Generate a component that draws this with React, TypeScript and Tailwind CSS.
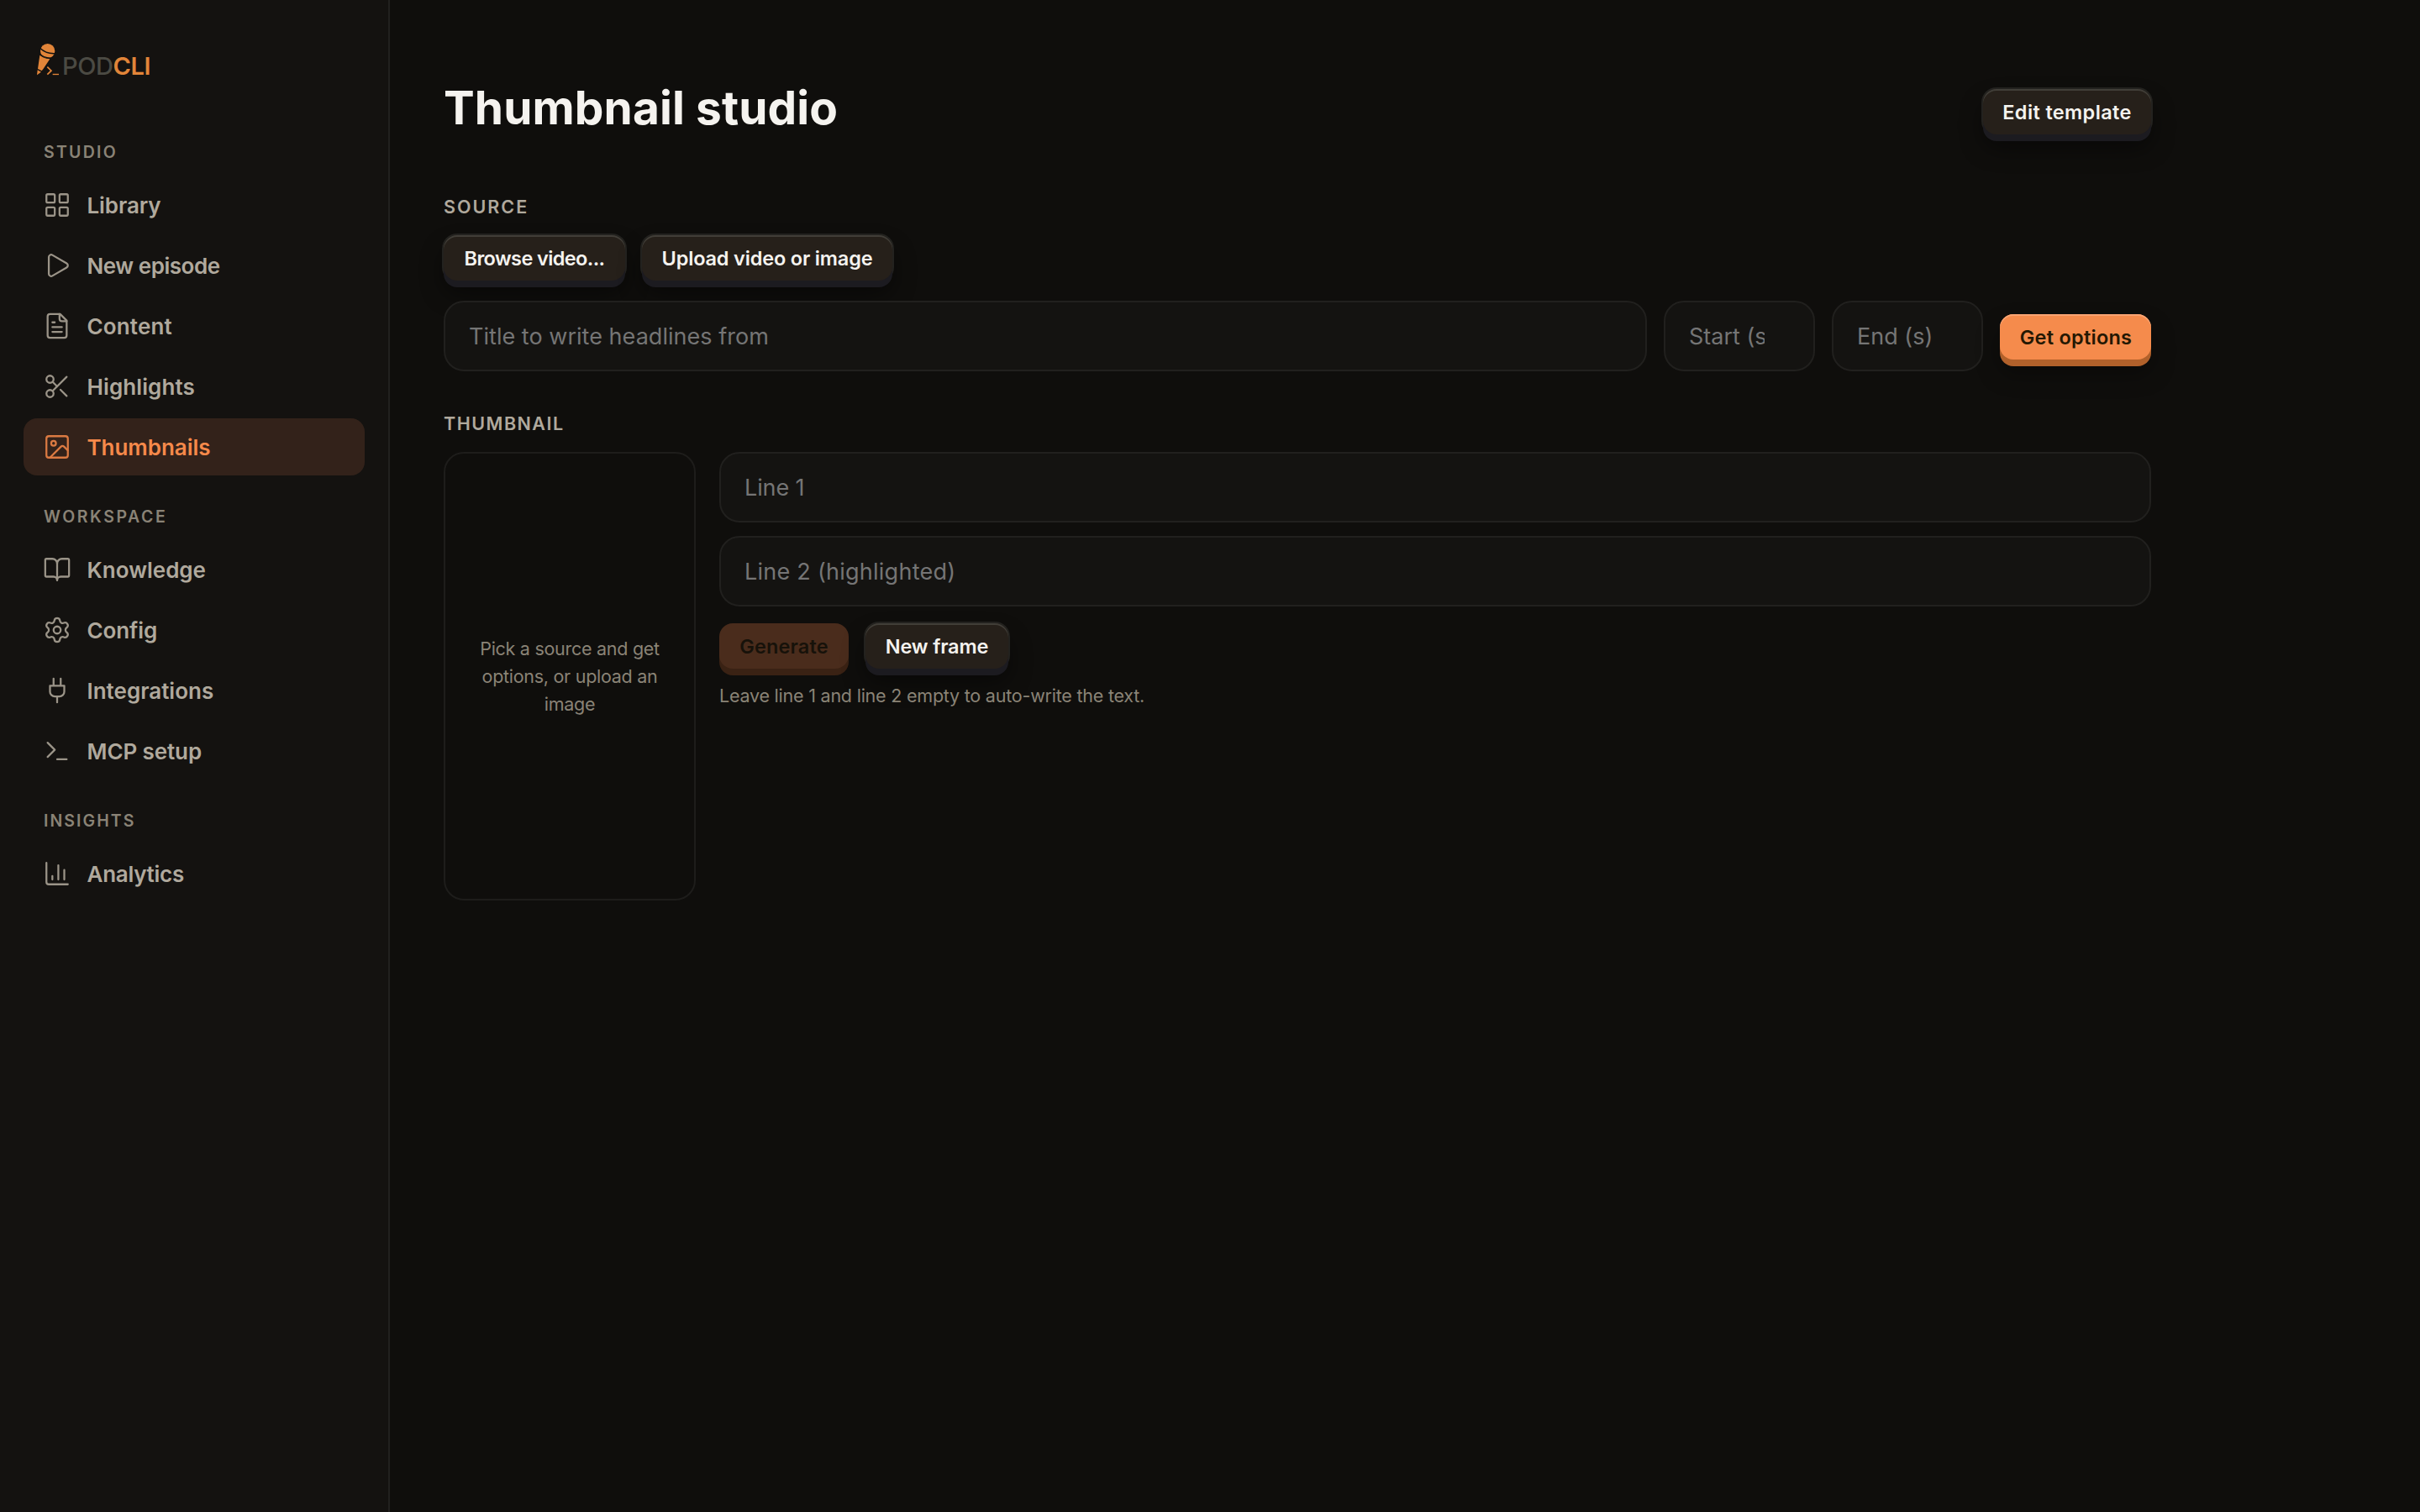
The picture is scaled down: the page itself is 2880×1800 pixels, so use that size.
import type { ReactNode } from "react";
import { BookOpen, Image, LayoutGrid, Play, Scissors, Settings, type LucideIcon } from "lucide-react";

type Glyph = LucideIcon | (() => ReactNode);
type Item = { label: string; icon: Glyph; track: string; active?: boolean };

const svgProps = {
  width: 34,
  height: 34,
  viewBox: "0 0 24 24",
  fill: "none",
  stroke: "currentColor",
  strokeWidth: 1.6,
  strokeLinecap: "round" as const,
  strokeLinejoin: "round" as const,
};

function FileIcon() {
  return (
    <svg {...svgProps}>
      <path d="M14.5 2H6a2 2 0 0 0-2 2v16a2 2 0 0 0 2 2h12a2 2 0 0 0 2-2V7.5Z" />
      <path d="M14 2v4a2 2 0 0 0 2 2h4M8 9h2M8 13h8M8 17h8" />
    </svg>
  );
}

function PlugIcon() {
  return (
    <svg {...svgProps}>
      <path d="M12 22v-5M9 8V2M15 8V2M18 8v5a4 4 0 0 1-4 4h-4a4 4 0 0 1-4-4V8Z" />
    </svg>
  );
}

function TerminalIcon() {
  return (
    <svg {...svgProps}>
      <path d="m4 17 6-6-6-6M12 19h8" />
    </svg>
  );
}

function ChartIcon() {
  return (
    <svg {...svgProps}>
      <path d="M3 3v16a2 2 0 0 0 2 2h16M8 17v-3M13 17V5M18 17V9" />
    </svg>
  );
}

const groups: { title: string; track: string; items: Item[] }[] = [
  {
    title: "STUDIO",
    track: "tracking-[2.25px]",
    items: [
      { label: "Library", icon: LayoutGrid, track: "tracking-[-0.1px]" },
      { label: "New episode", icon: Play, track: "tracking-[-0.46px]" },
      { label: "Content", icon: FileIcon, track: "tracking-[0.15px]" },
      { label: "Highlights", icon: Scissors, track: "tracking-[0.1px]" },
      { label: "Thumbnails", icon: Image, track: "tracking-[-0.05px]", active: true },
    ],
  },
  {
    title: "WORKSPACE",
    track: "tracking-[2.6px]",
    items: [
      { label: "Knowledge", icon: BookOpen, track: "tracking-[0px]" },
      { label: "Config", icon: Settings, track: "tracking-[-0.1px]" },
      { label: "Integrations", icon: PlugIcon, track: "tracking-[0px]" },
      { label: "MCP setup", icon: TerminalIcon, track: "tracking-[-0.1px]" },
    ],
  },
  {
    title: "INSIGHTS",
    track: "tracking-[2.05px]",
    items: [{ label: "Analytics", icon: ChartIcon, track: "tracking-[-0.28px]" }],
  },
];

function Logo() {
  return (
    <div className="flex h-[42px] items-start pl-[42px]">
      <svg className="h-[41.33px] w-[30px] shrink-0" viewBox="66 60 90 124" fill="none">
        <circle cx="110" cy="92" r="26" fill="#e28539" />
        <path d="M83 82Q104 103 137 101" stroke="#141210" strokeWidth="4.5" />
        <path d="M82 107Q97 119 118 121L94 157L89 163L75 156Z" fill="#e28539" />
        <path d="M78 99Q96 119 126 117" stroke="#141210" strokeWidth="4" />
        <path d="M74 160L87 167L72 178Z" fill="#e28539" />
        <path d="M109 149L123 162.5L109 176" stroke="#e28539" strokeWidth="5" />
        <path d="M128 175.5H150" stroke="#e28539" strokeWidth="4" />
      </svg>
      <div className="mt-[9px] ml-[2px] text-[29px] leading-[40px] font-[550] tracking-[-0.4px] text-[#4b4a43]">
        POD<span className="font-semibold text-[#e28539]">CLI</span>
      </div>
    </div>
  );
}

function NavItem({ label, icon: Icon, track, active }: Item) {
  return (
    <div
      className={`flex h-[68px] items-center rounded-[16px] pl-[23px] ${
        active ? "bg-[#33221a] text-[#f6894a]" : "text-[#b0a99d]"
      }`}
    >
      <span className={`flex w-[34px] justify-center ${active ? "text-[#db7a42]" : "text-[#9b9488]"}`}>
        <Icon size={34} strokeWidth={1.6} />
      </span>
      <span className={`ml-[18.5px] pt-px text-[26px] leading-[36px] font-[560] ${track}`}>{label}</span>
    </div>
  );
}

function Sidebar() {
  return (
    <aside className="w-[464px] shrink-0 border-r-2 border-[#21201e] bg-[#141210] pt-[50px]">
      <Logo />
      <nav className="mt-[40px] flex flex-col">
        {groups.map((g) => (
          <section key={g.title} className="pr-[28px] pl-[28px]">
            <h2
              className={`mt-[34px] mb-[14px] pl-[24px] text-[19.5px] leading-[30px] font-semibold text-[#8a8376] ${g.track}`}
            >
              {g.title}
            </h2>
            <div className="flex flex-col gap-1">
              {g.items.map((it) => (
                <NavItem key={it.label} {...it} />
              ))}
            </div>
          </section>
        ))}
      </nav>
    </aside>
  );
}

function DarkButton({ children, className }: { children: ReactNode; className: string }) {
  return (
    <button
      className={`h-[54px] shrink-0 rounded-[16px] bg-[#26201a] pt-px text-[23.5px] leading-[54px] font-semibold whitespace-nowrap text-[#f5f3ef] shadow-[inset_0_2px_0_#413e38,0_8px_0_#1c1b20,0_0_0_2px_#23221f,0_16px_28px_rgba(0,0,0,0.45)] ${className}`}
    >
      {children}
    </button>
  );
}

function Field({ placeholder, className }: { placeholder: string; className: string }) {
  return (
    <input
      placeholder={placeholder}
      className={`h-[84px] min-w-0 rounded-[24px] border-2 border-[#21201e] bg-[#141311] text-[27px] text-white outline-none placeholder:text-[#757575] ${className}`}
    />
  );
}

function SectionTitle({ children, className }: { children: ReactNode; className: string }) {
  return (
    <h2 className={`text-[21.5px] leading-[32px] font-semibold text-[#b0a99d] ${className}`}>{children}</h2>
  );
}

export default function App() {
  return (
    <div className="flex h-[1800px] w-[2880px] overflow-hidden bg-[#0f0e0c] font-['Inter',sans-serif]">
      <Sidebar />
      <main className="flex w-[2096px] flex-col pt-[98px] pl-[64px]">
        <header className="flex h-[60px] items-start justify-between">
          <h1 className="text-[55px] leading-[60px] font-bold tracking-[0.1px] text-[#f5f3ef]">Thumbnail studio</h1>
          <DarkButton className="mt-[8px] w-[200px] tracking-[0.37px]">Edit template</DarkButton>
        </header>

        <SectionTitle className="mt-[72px] tracking-[2px]">SOURCE</SectionTitle>
        <div className="mt-[18px] flex gap-5">
          <DarkButton className="w-[216px] tracking-[-0.6px]">Browse video...</DarkButton>
          <DarkButton className="w-[298px] tracking-[-0.17px]">Upload video or image</DarkButton>
        </div>
        <div className="mt-[24px] flex items-start gap-5">
          <Field placeholder="Title to write headlines from" className="flex-1 px-[28px] tracking-[0.03px]" />
          <Field placeholder="Start (s)" className="w-[180px] pr-[58px] pl-[28px]" />
          <Field placeholder="End (s)" className="w-[180px] pr-[58px] pl-[28px]" />
          <button className="mt-[16px] h-[54px] w-[180px] shrink-0 rounded-[16px] bg-[#f58b4c] pt-px pl-px text-[23.5px] leading-[54px] font-semibold tracking-[0.25px] whitespace-nowrap text-[#241803] shadow-[inset_0_2px_0_#f9a473,0_8px_0_#b1612b,0_16px_28px_rgba(0,0,0,0.35)]">
            Get options
          </button>
        </div>

        <SectionTitle className="mt-[46px] tracking-[1.5px]">THUMBNAIL</SectionTitle>
        <div className="mt-[18px] flex items-start gap-7">
          <div className="flex h-[534px] w-[300px] shrink-0 items-center justify-center rounded-[24px] border-2 border-[#1e1d1b] pt-px text-center text-[21.5px] leading-[33px] tracking-[-0.28px] text-[#8a8376]">
            <p>
              Pick a source and get
              <br />
              options, or upload an
              <br />
              image
            </p>
          </div>
          <div className="flex flex-1 flex-col">
            <Field placeholder="Line 1" className="px-[28px] tracking-[-0.1px]" />
            <Field placeholder="Line 2 (highlighted)" className="mt-4 px-[28px] tracking-[0.25px]" />
            <div className="mt-5 flex gap-5">
              <button className="h-[54px] w-[154px] rounded-[16px] bg-[#4a2c1c] pt-px text-[23.5px] leading-[54px] font-semibold tracking-[0.16px] text-[#17120a] shadow-[0_8px_0_#3a2214]">
                Generate
              </button>
              <DarkButton className="w-[170px] tracking-[-0.15px]">New frame</DarkButton>
            </div>
            <p className="mt-4 text-[21.5px] leading-[33px] tracking-[-0.22px] text-[#8a8376]">
              Leave line 1 and line 2 empty to auto-write the text.
            </p>
          </div>
        </div>
      </main>
    </div>
  );
}
